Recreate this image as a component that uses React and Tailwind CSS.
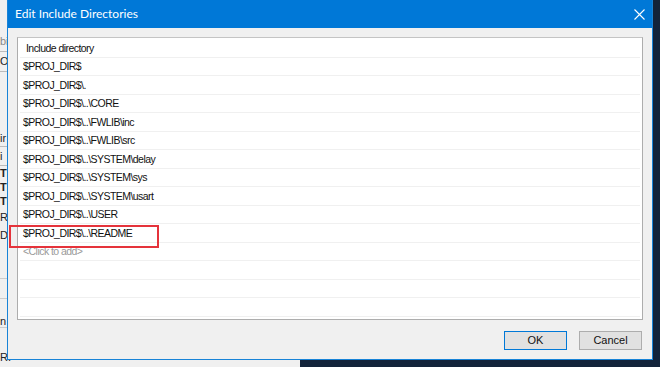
import React from 'react';

const rows = [
  '$PROJ_DIR$',
  '$PROJ_DIR$\\.',
  '$PROJ_DIR$\\..\\CORE',
  '$PROJ_DIR$\\..\\FWLIB\\inc',
  '$PROJ_DIR$\\..\\FWLIB\\src',
  '$PROJ_DIR$\\..\\SYSTEM\\delay',
  '$PROJ_DIR$\\..\\SYSTEM\\sys',
  '$PROJ_DIR$\\..\\SYSTEM\\usart',
  '$PROJ_DIR$\\..\\USER',
  '$PROJ_DIR$\\..\\README',
];

// trozos de la ventana que queda detrás del diálogo (alto de cada franja)
const backStrip = [
  { h: 'h-[31px]', t: '' },
  { h: 'h-[20px]', t: 'bin', cls: 'text-[#888]' },
  { h: 'h-[21px]', t: 'Output', cls: 'border-y border-[#bbb]' },
  { h: 'h-[58px]', t: '' },
  { h: 'h-[16px]', t: 'ir' },
  { h: 'h-[20px]', t: 'i', cls: 'border-y border-[#bbb]' },
  { h: 'h-[14px]', t: 'TEXT', cls: 'font-bold' },
  { h: 'h-[14px]', t: 'TEXT', cls: 'font-bold' },
  { h: 'h-[14px]', t: 'TEXT', cls: 'font-bold' },
  { h: 'h-[18px]', t: 'R' },
  { h: 'h-[18px]', t: 'D' },
  { h: 'h-[35px]', t: '', cls: 'border-b border-[#ccc]' },
  { h: 'h-[20px]', t: '', cls: 'border-b border-[#ccc]' },
  { h: 'h-[29px]', t: 'n', cls: 'border-b border-[#ccc] items-end' },
  { h: 'h-[20px]', t: '' },
  { h: 'h-[19px]', t: 'RI' },
];

const CloseIcon = () => (
  <svg width="11" height="11" viewBox="0 0 11 11" fill="none">
    <path d="M0.5 0.5L10.5 10.5M10.5 0.5L0.5 10.5" stroke="white" strokeWidth="1.1" />
  </svg>
);

const Row = ({ children, className = '' }) => (
  <div className={`h-[18.5px] mx-[2px] border-b border-[#f0f0f0] flex items-center pl-[3px] ${className}`}>
    {children}
  </div>
);

export default function App() {
  return (
    <div
      className="relative w-[660px] h-[367px] overflow-hidden bg-[#13233a]"
      style={{ fontFamily: '"Liberation Sans", Arial, sans-serif' }}
    >
      {/* ventana de fondo */}
      <div className="absolute left-0 top-0 w-[300px] h-full bg-[#f0f0f0] text-[11px] text-[#222] flex flex-col">
        {backStrip.map((b, i) => (
          <div key={i} className={`shrink-0 w-[40px] flex items-center leading-none ${b.h} ${b.cls || ''}`}>
            {b.t}
          </div>
        ))}
      </div>

      {/* diálogo */}
      <div className="absolute left-[7px] top-0 w-[646px] h-[360px] bg-[#f0f0f0] border-x border-b border-[#1883d7] flex flex-col">
        <div className="h-[28px] bg-[#0078d7] flex items-center justify-between pl-[7px] pr-[7px] shrink-0">
          <span
            className="text-white text-[12px]"
            style={{ fontFamily: 'Lato, "Noto Sans", sans-serif' }}
          >
            Edit Include Directories
          </span>
          <CloseIcon />
        </div>

        <div className="ml-[9px] mt-[9px] w-[626px] h-[283px] pt-[1px] bg-white border border-[#adadad] border-t-[#c4c4c4] text-[10.5px] tracking-[-0.55px] text-[#111] overflow-hidden">
          <Row className="pl-[6px] pt-[2px]">Include directory</Row>
          {rows.map((r, i) => (
            <Row key={i} className="pt-[2px]">{r}</Row>
          ))}
          <Row className="pt-[2px] text-[#9a9a9a]">&lt;Click to add&gt;</Row>
          <Row />
          <Row />
          <Row />
        </div>

        <div className="flex justify-end gap-[12px] mt-[11px] mr-[10px]">
          <button className="w-[63px] h-[19px] bg-[#e1e1e1] border border-[#0078d7] text-[11px] text-[#111] flex items-center justify-center">
            OK
          </button>
          <button className="w-[63px] h-[19px] bg-[#e1e1e1] border border-[#adadad] text-[11px] text-[#111] flex items-center justify-center">
            Cancel
          </button>
        </div>
      </div>

      {/* marco rojo */}
      <div className="absolute left-[9px] top-[225px] w-[150px] h-[23px] border-2 border-[#e5333b]" />
    </div>
  );
}
